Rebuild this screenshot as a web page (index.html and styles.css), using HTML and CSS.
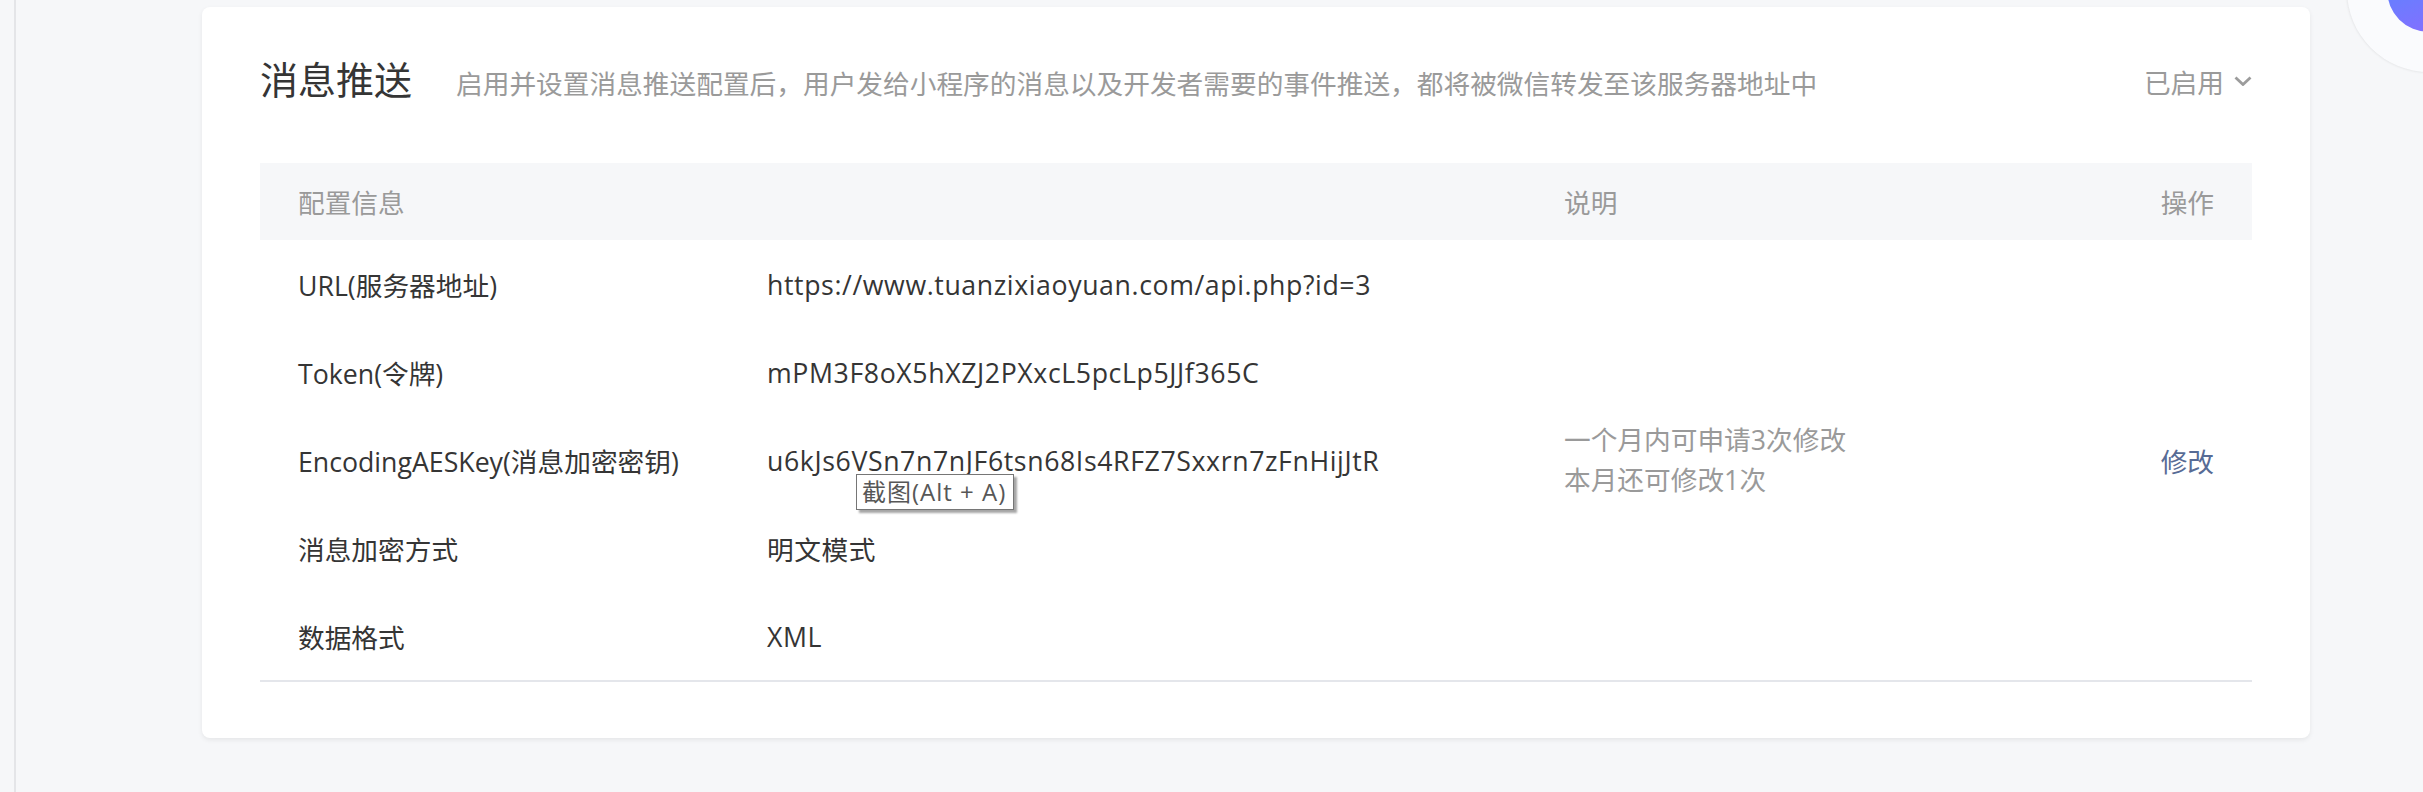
FILE: index.html
```html
<!DOCTYPE html>
<html lang="zh-CN">
<head>
  <meta charset="UTF-8">
  <meta name="viewport" content="width=device-width, initial-scale=1.0">
  <title>消息推送</title>
  <link rel="stylesheet" href="styles.css">
</head>
<body>
  <aside class="sidebar"></aside>
  <main class="main">
    <section class="card">
      <div class="card-head">
        <div class="head-left">
          <h2 class="title">消息推送</h2>
          <span class="desc">启用并设置消息推送配置后，用户发给小程序的消息以及开发者需要的事件推送，都将被微信转发至该服务器地址中</span>
        </div>
        <div class="status">
          <span>已启用</span>
          <svg class="chevron" width="18" height="10" viewBox="0 0 18 10"><path d="M1.5 1.5 L9 8.5 L16.5 1.5" fill="none" stroke="#9c9c9c" stroke-width="2.8"/></svg>
        </div>
      </div>

      <div class="table">
        <div class="row table-header">
          <div>配置信息</div>
          <div></div>
          <div>说明</div>
          <div class="op">操作</div>
        </div>
        <div class="row">
          <div>URL(服务器地址)</div>
          <div class="value">https://www.tuanzixiaoyuan.com/api.php?id=3</div>
          <div></div>
          <div></div>
        </div>
        <div class="row">
          <div>Token(令牌)</div>
          <div class="value">mPM3F8oX5hXZJ2PXxcL5pcLp5JJf365C</div>
          <div></div>
          <div></div>
        </div>
        <div class="row">
          <div>EncodingAESKey(消息加密密钥)</div>
          <div class="value key-cell">
            u6kJs6VSn7n7nJF6tsn68Is4RFZ7Sxxrn7zFnHijJtR
            <span class="tooltip">截图(Alt + A)</span>
          </div>
          <div class="note">一个月内可申请3次修改<br>本月还可修改1次</div>
          <div class="op"><a href="#" class="link">修改</a></div>
        </div>
        <div class="row">
          <div>消息加密方式</div>
          <div class="value">明文模式</div>
          <div></div>
          <div></div>
        </div>
        <div class="row last">
          <div>数据格式</div>
          <div class="value">XML</div>
          <div></div>
          <div></div>
        </div>
      </div>
    </section>
  </main>

  <div class="float-btn"><div class="float-blob"></div></div>
</body>
</html>
```

FILE: styles.css
```css
/* General Styling */
html, body {
  margin: 0;
  padding: 0;
  height: 100%;
  background: #f6f7f9;
  color: #353535;
  font-family: "Open Sans", "Noto Sans CJK SC", sans-serif;
  font-size: 26.7px;
  overflow: hidden;
}
body {
  display: flex;
  align-items: flex-start;
}
.sidebar {
  width: 14px;
  height: 100vh;
  border-right: 2px solid #e4e5e8;
  flex-shrink: 0;
}
.main {
  flex-grow: 1;
  padding: 7px 0 0 186px;
}

/* Card */
.card {
  width: 2108px;
  box-sizing: border-box;
  background: #fff;
  border-radius: 8px;
  box-shadow: 0 2px 5px rgba(0, 0, 0, 0.07);
  padding: 47px 58px 56px;
}
.card-head {
  display: flex;
  justify-content: space-between;
  align-items: center;
  height: 50px;
  margin-bottom: 59px;
}
.head-left {
  display: flex;
  align-items: baseline;
  gap: 44px;
}
.title {
  margin: 0;
  font-size: 38px;
  font-weight: normal;
  line-height: 50px;
  color: #353535;
}
.desc {
  color: #9a9a9a;
}
.status {
  display: flex;
  align-items: center;
  gap: 10px;
  color: #9a9a9a;
  padding-top: 4px;
}

/* Table */
.row {
  display: grid;
  grid-template-columns: 469px 797px 1fr auto;
  align-items: center;
  height: 88px;
  padding: 0 38px;
}
.table-header {
  height: 77px;
  background: #f6f7f9;
  color: #9a9a9a;
}
.row.last {
  border-bottom: 2px solid #e4e6eb;
}
.value {
  letter-spacing: 0.6px;
}
.op {
  text-align: right;
}
.note {
  color: #9a9a9a;
  line-height: 40px;
}
.link {
  color: #576b95;
  text-decoration: none;
}
.key-cell {
  position: relative;
}

/* Screenshot tooltip over the key */
.tooltip {
  position: absolute;
  left: 89px;
  top: 32px;
  padding: 1px 7px 1px 5px;
  font-size: 24px;
  line-height: 32px;
  letter-spacing: 1px;
  color: #575757;
  background: #fff;
  border: 1px solid #767676;
  box-shadow: 3px 3px 2px rgba(0, 0, 0, 0.35);
  white-space: nowrap;
}

/* Floating button at top right */
.float-btn {
  position: fixed;
  top: -92px;
  right: -88px;
  width: 164px;
  height: 164px;
  border-radius: 50%;
  background: #fafbfd;
  box-shadow: 0 0 3px rgba(0, 0, 0, 0.12);
}
.float-blob {
  position: absolute;
  left: 40px;
  top: 40px;
  width: 84px;
  height: 84px;
  border-radius: 50%;
  background: linear-gradient(160deg, #4d8dff, #8b6bff);
}
```
